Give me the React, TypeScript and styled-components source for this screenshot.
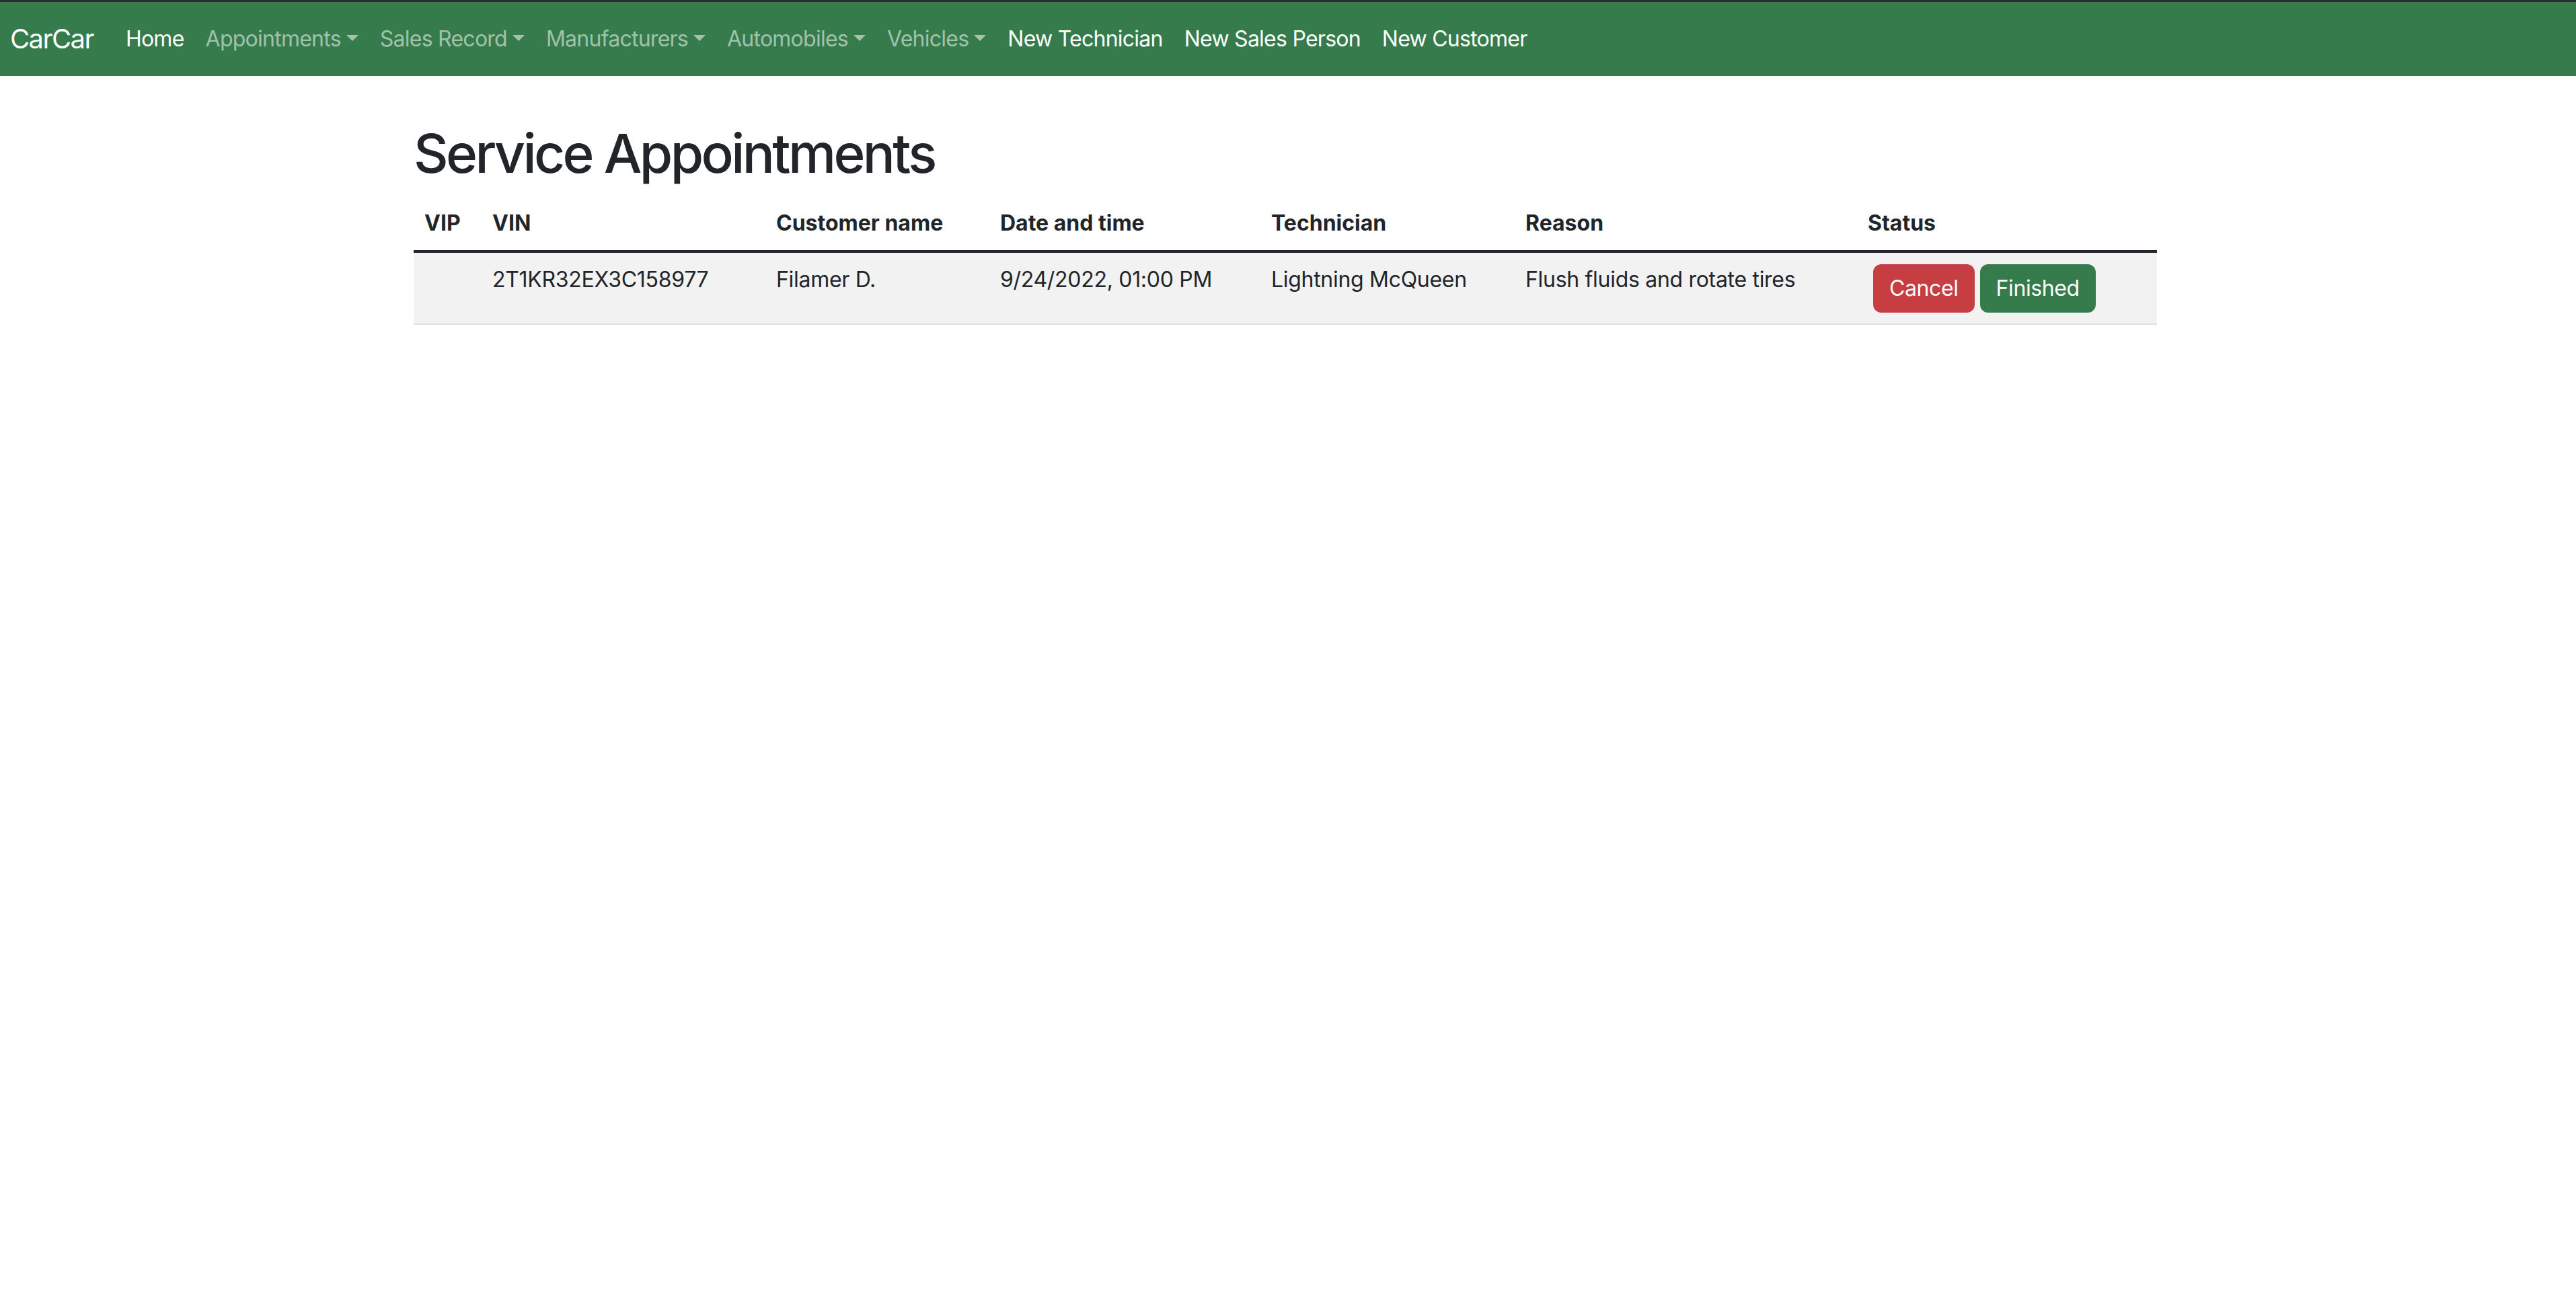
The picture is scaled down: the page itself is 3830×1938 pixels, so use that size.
import React from 'react';
import styled, { createGlobalStyle } from 'styled-components';

const GlobalStyle = createGlobalStyle`
  html, body {
    margin: 0;
    padding: 0;
    background: #fff;
  }
  body {
    font-family: Inter, "Noto Sans", "Liberation Sans", sans-serif;
    font-size: 32px;
    line-height: 1.5;
    color: #212529;
  }
  * { box-sizing: border-box; }
`;

const GREEN = '#357b4b';
const RED = '#c73e42';

const Navbar = styled.nav`
  height: 113px;
  border-top: 3px solid #2c2c2c;
  background: ${GREEN};
  display: flex;
  align-items: center;
  padding: 0 15px;
`;

const Brand = styled.a`
  font-size: 40px;
  line-height: 1.5;
  letter-spacing: -1.6px;
  color: #fff;
  text-decoration: none;
  margin-right: 32px;
  white-space: nowrap;
`;

const NavList = styled.ul`
  display: flex;
  align-items: center;
  list-style: none;
  margin: 0;
  padding: 0;
`;

const NavLink = styled.a<{ $dim?: boolean; $dropdown?: boolean }>`
  display: block;
  padding: 16px;
  letter-spacing: -0.75px;
  color: ${p => (p.$dim ? 'rgba(255,255,255,0.55)' : '#fff')};
  text-decoration: none;
  white-space: nowrap;
  ${p =>
    p.$dropdown &&
    `
    &::after {
      content: '';
      display: inline-block;
      margin-left: 8px;
      vertical-align: 8px;
      border-top: 9.6px solid;
      border-right: 9.6px solid transparent;
      border-left: 9.6px solid transparent;
      border-bottom: 0;
    }
  `}
`;

const Container = styled.main`
  width: 2592px;
  margin: 0 auto;
  padding-top: 67px;
  position: relative;
  left: -4px;
`;

const Title = styled.h1`
  font-size: 80px;
  font-weight: 500;
  line-height: 1.2;
  letter-spacing: -3.6px;
  margin: 0 0 16px;
`;

const Table = styled.table`
  width: 100%;
  table-layout: fixed;
  border-collapse: collapse;
`;

const HeadCell = styled.th`
  text-align: left;
  font-weight: 700;
  padding: 16px;
  vertical-align: bottom;
  border-bottom: 4px solid #212529;
  white-space: nowrap;
`;

const BodyRow = styled.tr`
  background: #f2f2f2;
  border-bottom: 2px solid #dee2e6;
`;

const Cell = styled.td`
  padding: 16px;
  vertical-align: top;
  white-space: nowrap;
  letter-spacing: -0.3px;
`;

const Actions = styled.div`
  display: flex;
  gap: 8px;
  padding-left: 8px;
  padding-top: 1px;
`;

const Button = styled.button<{ $color: string }>`
  font-family: inherit;
  font-size: 32px;
  line-height: 1.5;
  letter-spacing: -0.4px;
  color: #fff;
  background: ${p => p.$color};
  border: 2px solid ${p => p.$color};
  border-radius: 12px;
  padding: 10px 22px;
  cursor: pointer;
`;

const links = [
  { label: 'Home' },
  { label: 'Appointments', dropdown: true },
  { label: 'Sales Record', dropdown: true },
  { label: 'Manufacturers', dropdown: true },
  { label: 'Automobiles', dropdown: true },
  { label: 'Vehicles', dropdown: true },
  { label: 'New Technician' },
  { label: 'New Sales Person' },
  { label: 'New Customer' },
];

const columns = [
  { label: 'VIP', width: 101 },
  { label: 'VIN', width: 422 },
  { label: 'Customer name', width: 333 },
  { label: 'Date and time', width: 403 },
  { label: 'Technician', width: 378 },
  { label: 'Reason', width: 509 },
  { label: 'Status', width: 446 },
];

const appointments = [
  {
    id: 1,
    vip: '',
    vin: '2T1KR32EX3C158977',
    customer: 'Filamer D.',
    date: '9/24/2022, 01:00 PM',
    technician: 'Lightning McQueen',
    reason: 'Flush fluids and rotate tires',
  },
];

export default function App() {
  return (
    <>
      <GlobalStyle />
      <Navbar>
        <Brand href="#">CarCar</Brand>
        <NavList>
          {links.map(l => (
            <li key={l.label}>
              <NavLink href="#" $dim={l.dropdown} $dropdown={l.dropdown}>
                {l.label}
              </NavLink>
            </li>
          ))}
        </NavList>
      </Navbar>
      <Container>
        <Title>Service Appointments</Title>
        <Table>
          <colgroup>
            {columns.map(c => (
              <col key={c.label} style={{ width: c.width }} />
            ))}
          </colgroup>
          <thead>
            <tr>
              {columns.map(c => (
                <HeadCell key={c.label}>{c.label}</HeadCell>
              ))}
            </tr>
          </thead>
          <tbody>
            {appointments.map(a => (
              <BodyRow key={a.id}>
                <Cell>{a.vip}</Cell>
                <Cell>{a.vin}</Cell>
                <Cell>{a.customer}</Cell>
                <Cell>{a.date}</Cell>
                <Cell>{a.technician}</Cell>
                <Cell>{a.reason}</Cell>
                <Cell>
                  <Actions>
                    <Button $color={RED}>Cancel</Button>
                    <Button $color={GREEN}>Finished</Button>
                  </Actions>
                </Cell>
              </BodyRow>
            ))}
          </tbody>
        </Table>
      </Container>
    </>
  );
}
